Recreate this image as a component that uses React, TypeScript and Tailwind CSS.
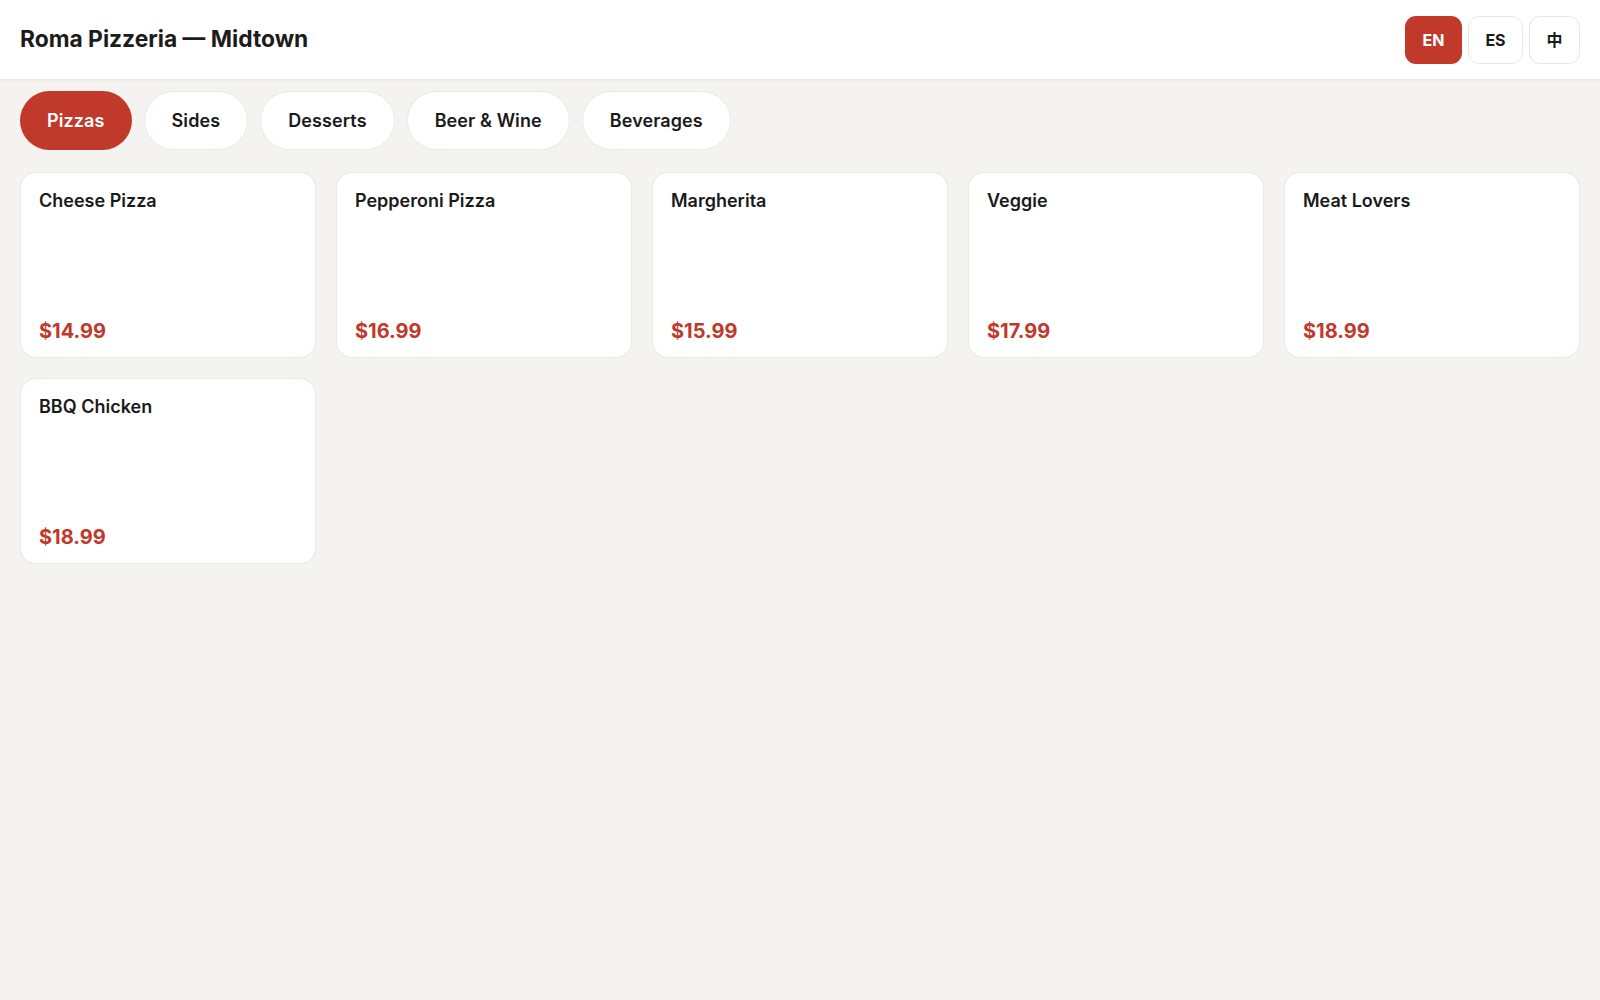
import React from "react";

const tabs = ["Pizzas", "Sides", "Desserts", "Beer & Wine", "Beverages"];
const items = [
  { name: "Cheese Pizza", price: "$14.99" },
  { name: "Pepperoni Pizza", price: "$16.99" },
  { name: "Margherita", price: "$15.99" },
  { name: "Veggie", price: "$17.99" },
  { name: "Meat Lovers", price: "$18.99" },
  { name: "BBQ Chicken", price: "$18.99" },
];

export default function App() {
  return (
    <div
      className="min-h-screen bg-[#f4f3f0] text-[#1a1a1a]"
      style={{ fontFamily: "Inter, 'Noto Sans', 'Noto Sans CJK SC', sans-serif" }}
    >
      <header className="h-[80px] bg-white flex items-center justify-between px-5 border-b border-[#e9e7e3] shadow-[0_1px_3px_rgba(0,0,0,0.04)]">
        <h1 className="text-[22.8px] font-bold text-[#1c1c1c]">Roma Pizzeria — Midtown</h1>
        <div className="flex items-center gap-[6px]">
          <button className="h-[48px] w-[57px] rounded-[11px] bg-[#c0392b] text-white text-[16px] font-bold">EN</button>
          <button className="h-[48px] w-[55px] rounded-[11px] bg-white border border-[#e8e6e2] text-[16px] font-bold">ES</button>
          <button className="h-[48px] w-[51px] rounded-[11px] bg-white border border-[#e8e6e2] text-[16px] font-bold">中</button>
        </div>
      </header>
      <nav className="flex gap-[12px] px-5 pt-[11px] pb-[22px]">
        {tabs.map((t, i) => (
          <button
            key={t}
            className={
              i === 0
                ? "h-[59px] px-[27px] rounded-full bg-[#c0392b] text-white text-[18px] font-semibold tracking-[0.1px]"
                : "h-[59px] px-[27px] rounded-full bg-white border border-[#ebe9e5] text-[18px] font-semibold tracking-[0.1px] text-[#1a1a1a]"
            }
          >
            {t}
          </button>
        ))}
      </nav>
      <main className="grid grid-cols-5 gap-5 px-5">
        {items.map((it) => (
          <div
            key={it.name}
            className="h-[186px] bg-white rounded-[16px] border border-[#ebe9e5] px-[18px] pt-[14px] pb-[11px] flex flex-col justify-between"
          >
            <div className="text-[18px] font-semibold text-[#1a1a1a]">{it.name}</div>
            <div className="text-[20px] font-bold text-[#c0392b]">{it.price}</div>
          </div>
        ))}
      </main>
    </div>
  );
}
